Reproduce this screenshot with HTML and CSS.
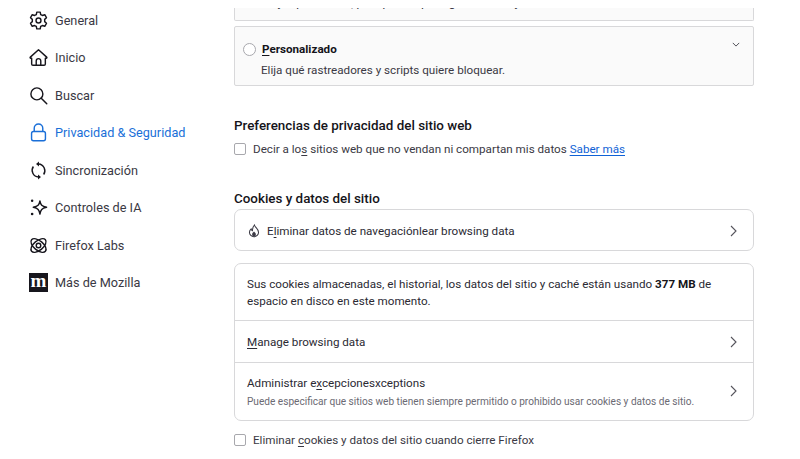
FILE: index.html
```html
<!DOCTYPE html>
<html lang="es">
<head>
<meta charset="utf-8">
<title>Ajustes</title>
<link rel="stylesheet" href="styles.css">
</head>
<body>
<div class="page">
  <nav class="side">
    <a class="nav-item"><svg class="ico" viewBox="0 0 20 20"><path d="M8.200 1.200h3.600l.5 2.500 1.800 1 2.500-.8 1.800 3.100-1.900 1.800v2.400l1.900 1.800-1.800 3.100-2.500-.8-1.800 1-.5 2.500H8.200l-.5-2.500-1.800-1-2.500.8-1.800-3.100 1.900-1.800V8.800L1.600 7l1.800-3.100 2.500.8 1.800-1z"/><circle cx="10" cy="10" r="2.600"/></svg><span>General</span></a>
    <a class="nav-item"><svg class="ico" viewBox="0 0 20 20"><path d="M10 1.800 1.400 9.600c-.5.5-.2 1.200.4 1.200h1v6c0 .8.6 1.400 1.400 1.400h11.600c.8 0 1.400-.6 1.400-1.400v-6h1c.6 0 .9-.7.4-1.200z"/><path d="M7.600 18v-4.400a2.400 2.400 0 0 1 4.800 0V18"/></svg><span>Inicio</span></a>
    <a class="nav-item"><svg class="ico" viewBox="0 0 20 20"><circle cx="8.300" cy="8.300" r="6.300"/><path d="m12.900 12.900 5.800 5.800" stroke-linecap="round"/></svg><span>Buscar</span></a>
    <a class="nav-item active"><svg class="ico" viewBox="0 0 20 20"><path d="M5.500 9V5.600a4.500 4.500 0 0 1 9 0V9"/><rect x="2.700" y="9" width="14.600" height="9.600" rx="2"/></svg><span>Privacidad &amp; Seguridad</span></a>
    <a class="nav-item"><svg class="ico" viewBox="0 0 20 20"><path d="M15.400 14.200A7 7 0 0 0 10 3.200H9"/><path d="M4.600 5.800A7 7 0 0 0 10 16.800h1"/><path class="solid" d="M10.500.6v5.200L7.400 3.200zM9.500 14.200v5.200l3.100-2.600z"/></svg><span>Sincronización</span></a>
    <a class="nav-item"><svg class="ico" viewBox="0 0 20 20"><path d="M11.500 3c.7 4.300 2 5.800 7 6.800-5 1-6.300 2.500-7 7.200-.7-4.700-2-6.200-7-7.200 5-1 6.300-2.500 7-6.800z"/><circle class="solid" cx="3.300" cy="2.800" r="1.300"/><circle class="solid" cx="3.300" cy="16.800" r="1.400"/></svg><span>Controles de IA</span></a>
    <a class="nav-item"><svg class="ico" viewBox="0 0 20 20"><circle cx="10" cy="10" r="2.400"/><ellipse cx="10" cy="10" rx="9.500" ry="5" transform="rotate(40 10 10)"/><ellipse cx="10" cy="10" rx="9.500" ry="5" transform="rotate(-40 10 10)"/></svg><span>Firefox Labs</span></a>
    <a class="nav-item"><span class="moz">m</span><span>Más de Mozilla</span></a>
  </nav>
  <main class="content">
    <div class="clip">
      <div class="card tint cut"><p>Mayor protección, pero puede que algunos sitios y contenidos no funcionen.</p></div>
    </div>
    <div class="card tint custom">
      <div class="custom-head"><span class="radio"></span><b class="strong"><u>P</u>ersonalizado</b><svg class="chev-d" viewBox="0 0 10 6"><path d="m1 1 4 4 4-4"/></svg></div>
      <p class="custom-desc">Elija qué rastreadores y scripts quiere bloquear.</p>
    </div>

    <h2 class="h-privacy">Preferencias de privacidad del sitio web</h2>
    <label class="check"><span class="box"></span><span>Decir a lo<u>s</u> sitios web que no vendan ni compartan mis datos <a class="link">Saber más</a></span></label>

    <h2 class="h-cookies">Cookies y datos del sitio</h2>
    <div class="card row single">
      <svg class="flame" viewBox="0 0 14 16"><path d="M7.500 1c.3 2.600 4.800 4.300 4.800 8.500A5.200 5.200 0 0 1 7 14.700a5.200 5.200 0 0 1-5.300-5.200c0-2 1-3 2-3.900.2 1.200.7 1.800 1.500 2C5 5 5.800 2.800 7.500 1z"/><path class="solid" d="M7 8.500c1 1 2.200 1.900 2.200 3.500a2.200 2.200 0 0 1-4.400 0C4.800 10.400 6 9.500 7 8.500z"/></svg>
      <span class="grow">E<u>l</u>iminar datos de navegaciónlear browsing data</span>
      <svg class="chev" viewBox="0 0 7 12"><path d="m1 1 5 5-5 5"/></svg>
    </div>

    <div class="card stack">
      <p class="usage">Sus cookies almacenadas, el historial, los datos del sitio y caché están usando <b class="strong">377 MB</b> de espacio en disco en este momento.</p>
      <div class="row manage"><span class="grow"><u>M</u>anage browsing data</span><svg class="chev" viewBox="0 0 7 12"><path d="m1 1 5 5-5 5"/></svg></div>
      <div class="row except">
        <div class="grow"><div>Administrar e<u>x</u>cepcionesxceptions</div><div class="hint">Puede especificar que sitios web tienen siempre permitido o prohibido usar cookies y datos de sitio.</div></div>
        <svg class="chev" viewBox="0 0 7 12"><path d="m1 1 5 5-5 5"/></svg>
      </div>
    </div>
    <label class="check last"><span class="box"></span><span>Eliminar <u>c</u>ookies y datos del sitio cuando cierre Firefox</span></label>
  </main>
</div>
</body>
</html>
```
FILE: styles.css
```css
* { box-sizing: border-box; }
html, body { margin: 0; height: 459px; overflow: hidden; background: #fff; }
body { font-family: Roboto, "Open Sans", sans-serif; font-size: 11.65px; color: #2b2a33; }
p { margin: 0; }
u { text-underline-offset: 2px; text-decoration-thickness: 1px; }
.page { display: flex; height: 459px; }
.side { width: 234px; flex: none; padding: 1.500px 0 0 29px; display: flex; flex-direction: column; }
.nav-item { height: 37.500px; display: flex; align-items: center; gap: 7px; font-size: 12.700px; color: #3a3944; }
.nav-item.active { color: #1a6fd8; }
.ico { width: 19px; height: 19px; flex: none; fill: none; stroke: #17161d; stroke-width: 1.5; stroke-linejoin: round; }
.active .ico { stroke: #1a6fd8; }
.ico .solid { fill: #17161d; stroke: none; }
.moz { width: 19px; height: 19px; background: #17161d; color: #fff; font: 700 19px/15px "Liberation Serif", serif; text-align: center; overflow: hidden; flex: none; }
.content { width: 520px; padding-top: 8px; }
.clip { height: 13px; overflow: hidden; }
.card { border: 1px solid #d8d8da; border-radius: 4px; background: #fff; }
.tint { background: #fafafa; border-radius: 2px; }
.cut { display: flow-root; height: 13px; border-top: 0; border-radius: 0 0 2px 2px; padding-left: 26px; }
.cut p { margin-top: -13px; line-height: 17px; white-space: nowrap; }
.custom { margin-top: 5px; height: 60px; padding: 13px 13px 0 8px; }
.custom-head { display: flex; align-items: center; height: 18px; }
.radio { width: 13px; height: 13px; border: 1px solid #a8a8ad; border-radius: 50%; background: #fff; margin-right: 6px; }
.strong { font-weight: 700; color: #15141a; }
.custom-head .strong { flex: 1; }
.chev-d { width: 8px; height: 5px; fill: none; stroke: #4a4a52; stroke-width: 1.2; margin-top: -9px; }
.custom-desc { margin: 4px 0 0 18px; line-height: 17px; color: #3a3944; }
h2 { margin: 0; font-size: 13.400px; font-weight: 500; line-height: 18px; color: #15141a; }
.h-privacy { margin-top: 31px; }
.check { display: flex; align-items: center; gap: 7px; height: 18px; color: #3a3944; }
.h-privacy + .check { margin-top: 5px; }
.box { width: 12px; height: 12px; border: 1px solid #a8a8ad; border-radius: 2px; background: #fff; flex: none; }
.link { color: #0f62d6; text-decoration: underline; text-underline-offset: 2px; }
.h-cookies { margin-top: 32px; }
.row { display: flex; align-items: center; }
.single { margin-top: 1px; height: 42px; padding: 1px 16px 0 13px; border-radius: 7px; }
.flame { width: 12px; height: 14px; margin-right: 7px; fill: none; stroke: #3a3944; stroke-width: 1.2; flex: none; }
.flame .solid { fill: #3a3944; stroke: none; }
.grow { flex: 1; min-width: 0; }
.chev { width: 7px; height: 12px; fill: none; stroke: #55545c; stroke-width: 1.1; flex: none; }
.stack { margin-top: 12px; border-radius: 7px; }
.usage { padding: 12px 30px 10px 12px; line-height: 17px; height: 56px; color: #2b2a33; }
.manage { height: 42px; border-top: 1px solid #d8d8da; padding: 1px 16px 0 12px; }
.except { height: 58px; border-top: 1px solid #d8d8da; padding: 0 16px 1px 12px; }
.hint { font-size: 10.100px; color: #6b6a73; margin-top: 6px; }
.check.last { margin-top: 10px; }
```
